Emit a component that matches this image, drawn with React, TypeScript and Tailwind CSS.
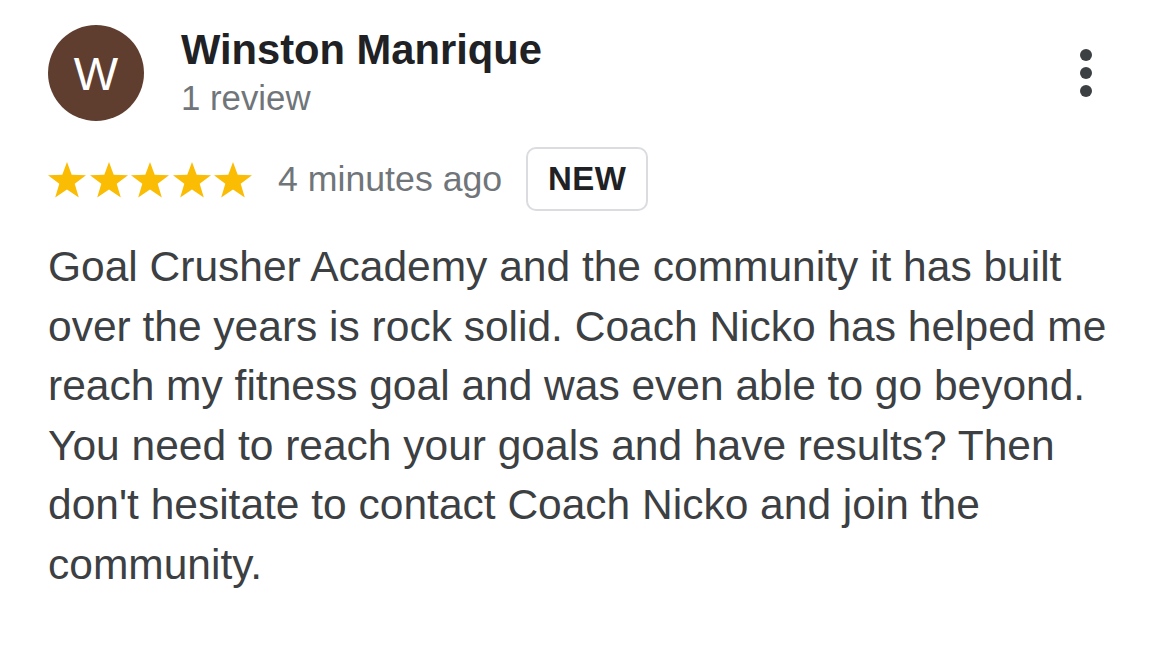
import React from 'react';

const Star = () => (
    <svg width="38" height="36" viewBox="0 0 38 36" className="block">
        <polygon
            fill="#fbbc04"
            points="19,0 23.7,12.7 38,13.3 26.7,21.7 30.8,35.5 19,27.4 7.2,35.5 11.3,21.7 0,13.3 14.3,12.7"
        />
    </svg>
);

export default function App() {
    return (
        <div className="w-[1170px] h-[652px] bg-white overflow-hidden" style={{ fontFamily: '"Liberation Sans", Arial, sans-serif' }}>
            {/* header */}
            <div className="flex pl-[48px] pr-[78px] pt-[25px]">
                <div className="w-[96px] h-[96px] rounded-full bg-[#5f3e30] flex items-center justify-center shrink-0">
                    <span className="text-white text-[47px] leading-none">W</span>
                </div>
                <div className="ml-[37px] flex flex-col pt-[1px]">
                    <div className="text-[41.7px] leading-[48px] font-bold text-[#202124]">Winston Manrique</div>
                    <div className="mt-[4px] text-[34.8px] leading-[40px] text-[#70757a]">1 review</div>
                </div>
                <div className="ml-auto pt-[24px] flex flex-col gap-[6px]">
                    <span className="w-[12px] h-[12px] rounded-full bg-[#3c4043]" />
                    <span className="w-[12px] h-[12px] rounded-full bg-[#3c4043]" />
                    <span className="w-[12px] h-[12px] rounded-full bg-[#3c4043]" />
                </div>
            </div>

            {/* rating row */}
            <div className="flex items-center pl-[48px] mt-[26px]">
                <div className="flex gap-[3.5px] pt-[1px]">
                    <Star />
                    <Star />
                    <Star />
                    <Star />
                    <Star />
                </div>
                <span className="ml-[26px] text-[35.7px] leading-[40px] text-[#70757a]">4 minutes ago</span>
                <span className="ml-[24px] w-[122px] h-[64px] border-2 border-[#dadce0] rounded-[10px] flex items-center justify-center text-[33px] font-bold tracking-[0.5px] text-[#202124]">
                    NEW
                </span>
            </div>

            {/* body */}
            <p className="pl-[48px] pr-[50px] mt-[26px] text-[42.5px] leading-[59.5px] text-[#3c4043]">
                Goal Crusher Academy and the community it has built over the years is rock solid. Coach Nicko has helped me reach my fitness goal and was even able to go beyond. You need to reach your goals and have results? Then don't hesitate to contact Coach Nicko and join the community.
            </p>
        </div>
    );
}
